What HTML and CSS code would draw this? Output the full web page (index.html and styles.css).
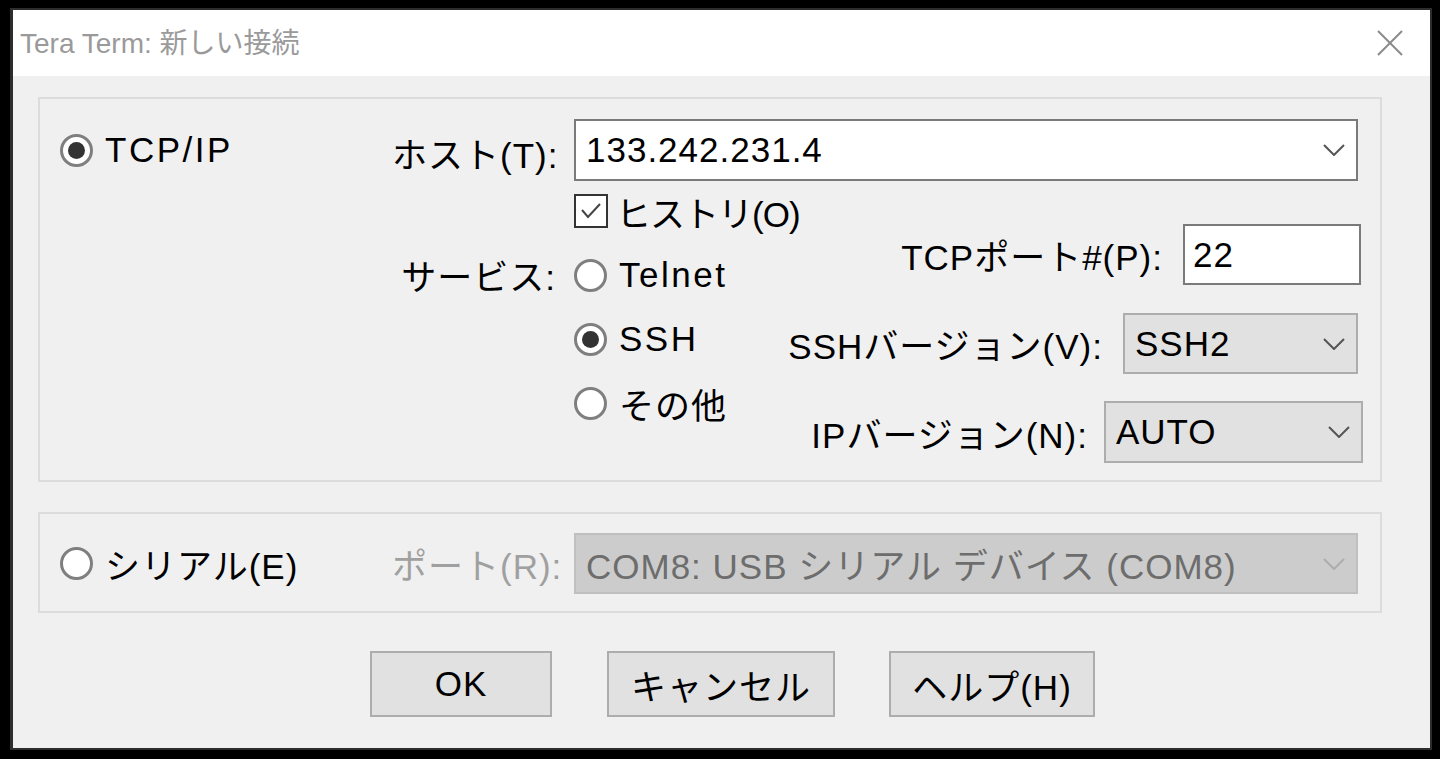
FILE: index.html
```html
<!DOCTYPE html>
<html lang="ja">
<head>
  <meta charset="UTF-8">
  <title>Tera Term: 新しい接続</title>
  <link rel="stylesheet" href="styles.css">
</head>
<body>

  <div class="window">
    <!-- title bar -->
    <div class="titlebar">
      <span class="title">Tera Term: 新しい接続</span>
      <svg class="close" width="26" height="26" viewBox="0 0 26 26">
        <line x1="1" y1="1" x2="25" y2="25" />
        <line x1="25" y1="1" x2="1" y2="25" />
      </svg>
    </div>

    <div class="content">
      <!-- TCP/IP group -->
      <div class="group group-tcp">
        <div class="cell-radio">
          <div class="option"><span class="radio checked"></span><span class="wide">TCP/IP</span></div>
        </div>
        <div class="cell-label host-label">ホスト(T):</div>
        <div class="cell-control">
          <div class="combo host-combo">
            <span class="combo-text">133.242.231.4</span>
            <svg class="chevron" width="22" height="12" viewBox="0 0 22 12"><polyline points="1,1 11,11 21,1" /></svg>
          </div>
        </div>

        <div class="cell-radio"></div>
        <div class="cell-label service-label">サービス:</div>
        <div class="cell-control service-area">
          <div class="options">
            <div class="option">
              <span class="checkbox">
                <svg width="30" height="30" viewBox="0 0 30 30"><polyline points="6,14 12,21 24,8" /></svg>
              </span>
              <span class="narrow">ヒストリ(O)</span>
            </div>
            <div class="option"><span class="radio"></span><span class="wide">Telnet</span></div>
            <div class="option"><span class="radio checked"></span><span class="wide">SSH</span></div>
            <div class="option"><span class="radio"></span><span>その他</span></div>
          </div>

          <div class="settings">
            <div class="setting port-row">
              <span>TCPポート#(P):</span>
              <div class="edit port-edit">22</div>
            </div>
            <div class="setting ssh-row">
              <span>SSHバージョン(V):</span>
              <div class="combo dropdown ssh-combo">
                <span class="combo-text">SSH2</span>
                <svg class="chevron" width="22" height="12" viewBox="0 0 22 12"><polyline points="1,1 11,11 21,1" /></svg>
              </div>
            </div>
            <div class="setting ip-row">
              <span>IPバージョン(N):</span>
              <div class="combo dropdown ip-combo">
                <span class="combo-text">AUTO</span>
                <svg class="chevron" width="22" height="12" viewBox="0 0 22 12"><polyline points="1,1 11,11 21,1" /></svg>
              </div>
            </div>
          </div>
        </div>
      </div>

      <!-- serial group -->
      <div class="group group-serial">
        <div class="cell-radio">
          <div class="option"><span class="radio"></span><span>シリアル(E)</span></div>
        </div>
        <div class="cell-label disabled-text">ポート(R):</div>
        <div class="cell-control">
          <div class="combo disabled-combo">
            <span class="combo-text">COM8: USB シリアル デバイス (COM8)</span>
            <svg class="chevron" width="22" height="12" viewBox="0 0 22 12"><polyline points="1,1 11,11 21,1" /></svg>
          </div>
        </div>
      </div>

      <!-- buttons -->
      <div class="buttons">
        <button class="btn btn-ok">OK</button>
        <button class="btn btn-cancel">キャンセル</button>
        <button class="btn btn-help">ヘルプ(H)</button>
      </div>
    </div>
  </div>

</body>
</html>
```

FILE: styles.css
```css
* {
  box-sizing: border-box;
}

body {
  margin: 0;
  background: #000;
  font-family: "Liberation Sans", "Noto Sans CJK JP", sans-serif;
  width: 1440px;
  height: 759px;
  overflow: hidden;
}

.window {
  margin: 8px 0 0 10px;
  width: 1422px;
  height: 742px;
  border: 2px solid #2d2d2d;
  border-left-width: 3px;
  background: #f0f0f0;
  display: flex;
  flex-direction: column;
}

/* title bar */
.titlebar {
  height: 66px;
  background: #fff;
  display: flex;
  align-items: center;
  justify-content: space-between;
  padding: 0 27px 4px 7px;
}

.title {
  font-size: 28px;
  color: #9a9a9a;
}

.close {
  margin-top: 4px;
}

.close line {
  stroke: #8a8a8a;
  stroke-width: 2;
}

.content {
  flex: 1;
  padding: 0 48px 0 25px;
  font-size: 35px;
  letter-spacing: 1px;
  color: #000;
}

/* group boxes */
.group {
  border: 2px solid #dcdcdc;
  display: grid;
  grid-template-columns: 332px 164px 807px;
  padding-left: 20px;
  padding-right: 17px;
}

.group-tcp {
  margin-top: 21px;
  padding-top: 20px;
  padding-bottom: 17px;
  grid-template-rows: 62px auto;
}

.group-serial {
  margin-top: 30px;
  padding-top: 19px;
  padding-bottom: 17px;
  grid-template-rows: 61px;
}

.cell-radio {
  display: flex;
  align-items: center;
}

.cell-label {
  text-align: right;
  white-space: nowrap;
  align-self: center;
}

.host-label {
  padding-top: 4px;
}

.service-label {
  align-self: start;
  margin-top: 68px;
}

.cell-control {
  padding-left: 18px;
}

.disabled-text {
  color: #a0a0a0;
}

/* options */
.option {
  display: flex;
  align-items: center;
  gap: 12px;
  height: 40px;
  white-space: nowrap;
}

.wide {
  letter-spacing: 2.5px;
}

.narrow {
  letter-spacing: -1px;
}

.radio {
  width: 33px;
  height: 33px;
  flex: none;
  border-radius: 50%;
  border: 3px solid #7f7f7f;
  background: #fff;
  display: flex;
  align-items: center;
  justify-content: center;
}

.radio.checked::after {
  content: "";
  width: 17px;
  height: 17px;
  border-radius: 50%;
  background: #333;
}

.checkbox {
  width: 34px;
  height: 34px;
  flex: none;
  border: 2px solid #333;
  background: #fff;
  display: flex;
  align-items: center;
  justify-content: center;
  margin-right: -4px;
}

.checkbox polyline {
  fill: none;
  stroke: #444;
  stroke-width: 2;
}

.service-area {
  display: flex;
}

.options {
  flex: none;
  width: 200px;
  display: flex;
  flex-direction: column;
  gap: 24px;
  margin-top: 10px;
}

/* settings on the right */
.settings {
  flex: 1;
  display: flex;
  flex-direction: column;
  align-items: flex-end;
}

.setting {
  display: flex;
  align-items: center;
  gap: 20px;
  white-space: nowrap;
}

.port-row {
  margin-top: 43px;
  margin-right: 2px;
}

.ssh-row {
  margin-top: 28px;
  margin-right: 5px;
}

.ip-row {
  margin-top: 27px;
  gap: 16px;
}

/* edit boxes and combos */
.edit {
  height: 61px;
  border: 2px solid #7a7a7a;
  background: #fff;
  display: flex;
  align-items: center;
  padding-left: 8px;
}

.port-edit {
  width: 178px;
}

.combo {
  height: 62px;
  border: 2px solid #7a7a7a;
  background: #fff;
  display: flex;
  align-items: center;
  padding: 0 11px 0 10px;
}

.combo-text {
  flex: 1;
  white-space: nowrap;
}

.chevron polyline {
  fill: none;
  stroke: #555;
  stroke-width: 2;
}

.host-combo {
  width: 784px;
}

.dropdown {
  background: #e1e1e1;
  border-color: #adadad;
}

.ssh-combo {
  width: 235px;
  height: 61px;
}

.ip-combo {
  width: 259px;
}

.disabled-combo {
  width: 784px;
  height: 61px;
  background: #cccccc;
  border-color: #bfbfbf;
  color: #6d6d6d;
}

.disabled-combo .chevron polyline {
  stroke: #adadad;
}

/* buttons */
.buttons {
  display: flex;
  margin-top: 38px;
  padding-left: 332px;
}

.btn {
  height: 66px;
  border: 2px solid #adadad;
  background: #e1e1e1;
  font-family: inherit;
  font-size: 35px;
  letter-spacing: 1px;
  color: #000;
  padding: 0;
}

.btn-ok {
  width: 182px;
}

.btn-cancel {
  width: 228px;
  margin-left: 55px;
}

.btn-help {
  width: 206px;
  margin-left: 54px;
}
```
